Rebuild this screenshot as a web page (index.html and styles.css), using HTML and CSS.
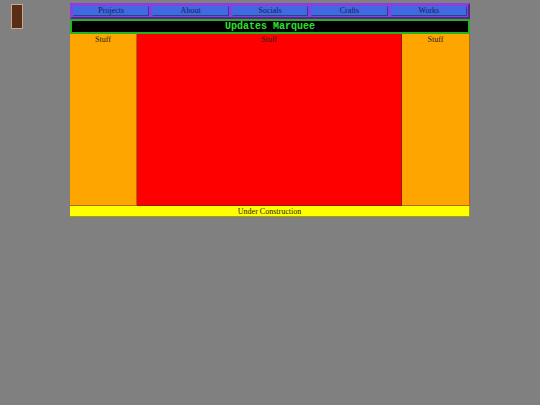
FILE: index.html
```html
<!DOCTYPE html>
<html>
<head>
<meta charset="utf-8">
<link rel="stylesheet" href="styles.css">
</head>
<body>
<div class="door"></div>
<div class="page">
  <nav class="nav">
    <a class="nav-item">Projects</a>
    <a class="nav-item">About</a>
    <a class="nav-item">Socials</a>
    <a class="nav-item">Crafts</a>
    <a class="nav-item">Works</a>
  </nav>
  <div class="marquee">Updates Marquee</div>
  <div class="columns">
    <div class="side">Stuff</div>
    <div class="main">Stuff</div>
    <div class="side">Stuff</div>
  </div>
  <div class="footer">Under Construction</div>
</div>
</body>
</html>
```
FILE: styles.css
```css
html, body {
  margin: 0;
  padding: 0;
  background: #808080;
  font-family: "Liberation Serif", "Times New Roman", serif;
}
.door {
  position: absolute;
  left: 11px;
  top: 4px;
  width: 10px;
  height: 23px;
  background: #5a2e14;
  border: 1px solid #c8a890;
}
.page {
  width: 400px;
  margin: 3px auto 0;
}
.nav {
  display: flex;
  gap: 3px;
  background: #8a40e0;
  border: 2px outset #8a40e0;
  padding: 1px 1px;
  height: 10px;
}
.nav-item {
  flex: 1;
  box-sizing: border-box;
  height: 10px;
  background: #4169e1;
  border: 1px outset #4169e1;
  font-size: 8px;
  line-height: 8px;
  text-align: center;
  color: #1a1a50;
}
.marquee {
  background: #000;
  border: 2px solid #22b222;
  color: #2ee02e;
  font-family: "Liberation Mono", "Courier New", monospace;
  font-weight: bold;
  font-size: 10px;
  line-height: 11px;
  text-align: center;
}
.columns {
  display: flex;
  height: 172px;
}
.side {
  width: 67px;
  background: #ffa500;
  border-right: 1px solid #b06a10;
  border-bottom: 1px solid #b06a10;
  box-sizing: border-box;
  font-size: 8px;
  text-align: center;
  padding-top: 1px;
  color: #222;
}
.side:last-child {
  width: 68px;
}
.main {
  flex: 1;
  background: #ff0000;
  border-right: 1px solid #a01010;
  border-bottom: 1px solid #a01010;
  box-sizing: border-box;
  font-size: 8px;
  text-align: center;
  padding-top: 1px;
  color: #222;
}
.footer {
  background: #ffff00;
  border-right: 1px solid #a0a000;
  border-bottom: 1px solid #a0a000;
  font-size: 8px;
  line-height: 9px;
  padding-top: 1px;
  text-align: center;
  color: #222;
}
```
